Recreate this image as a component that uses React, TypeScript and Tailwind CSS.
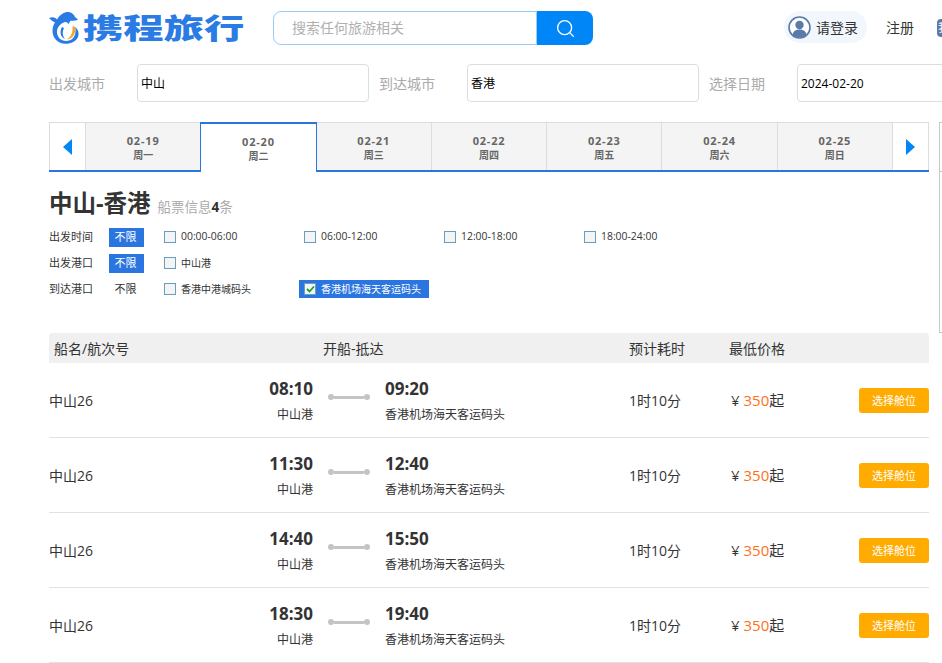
import { Search } from 'lucide-react';

const dates = [
    { d: '02-19', w: '周一' },
    { d: '02-20', w: '周二', active: true },
    { d: '02-21', w: '周三' },
    { d: '02-22', w: '周四' },
    { d: '02-23', w: '周五' },
    { d: '02-24', w: '周六' },
    { d: '02-25', w: '周日' },
];

const trips = [
    { dep: '08:10', arr: '09:20' },
    { dep: '11:30', arr: '12:40' },
    { dep: '14:40', arr: '15:50' },
    { dep: '18:30', arr: '19:40' },
];

function Logo() {
    return (
        <svg width="30" height="33" viewBox="0 0 30 33" className="shrink-0">
            <path
                d="M0 7 C3 5.5 6 6 8 8.5 C11 3 16 0.5 20 1 C23 1.5 25.5 4 26 6 L29 8.5 C27 9.8 24 10 21.5 9.8 L19.5 13 C18.5 11.5 17.5 10.8 16 11 C11 12.5 8 16.5 8 21 C8 26 12 30 17 30 C23 30 27 26 26.5 18 L26 16 C29 18 30.5 22 29 26 C27 30.5 22 33 16 32.8 C9 32.5 3.5 27 3.5 20 C3.5 16.5 4.5 13.5 6 11.5 C4 10.5 2 9 0 7 Z"
                fill="#2a7be4"
            />
            <path d="M13 16 C10.5 20 11 26 16 28 C13.5 25 13 21 15 17 Z" fill="#2a7be4" />
            <path d="M23.5 15.5 L25.8 15.5 C27.5 22 24 28 17.5 28.5 C21 27 23.5 23 23.5 18 Z" fill="#f5a623" />
        </svg>
    );
}

function Check({ label, checked, className }: { label: string; checked?: boolean; className?: string }) {
    return (
        <div className="flex items-center gap-[5px] whitespace-nowrap">
            <span className="flex h-3 w-3 shrink-0 items-center justify-center border border-[#6b9dbd] bg-[#f4f4f4]">
                {checked && (
                    <svg width="9" height="8" viewBox="0 0 9 8">
                        <path d="M1 4 L3.5 6.5 L8 1.5" fill="none" stroke="#16a02a" strokeWidth="1.8" />
                    </svg>
                )}
            </span>
            <span className={className ?? 'text-[10px]'}>{label}</span>
        </div>
    );
}

function Field({ label, value, width }: { label: string; value: string; width: string }) {
    return (
        <div className="flex shrink-0 items-center">
            <span className="w-[88px] pt-[2px] text-sm text-[#aaaaaa]">{label}</span>
            <div className={`flex h-[38px] items-center rounded border border-[#dddddd] pl-[3px] pt-[2px] text-xs text-black ${width}`}>{value}</div>
        </div>
    );
}

export default function App() {
    return (
        <div className="h-[663px] w-[942px] overflow-hidden bg-white font-['Open_Sans','Noto_Sans_CJK_SC',sans-serif] text-[#333333]">
            {/* Header */}
            <div className="flex h-[64px] pl-[49px] pt-[11px]">
                <div className="flex w-[224px] shrink-0 items-start gap-[4px]">
                    <Logo />
                    <span className="origin-left scale-x-[1.44] whitespace-nowrap text-[28px] font-black leading-[34px] text-[#2a7be4]">携程旅行</span>
                </div>
                <div className="flex h-[34px] w-[320px] shrink-0">
                    <div className="flex flex-1 items-center rounded-l-lg border border-[#9accf5] pl-[18px] text-sm text-[#b0b0b0]">搜索任何旅游相关</div>
                    <div className="flex w-[56px] items-center justify-center rounded-r-lg bg-[#0086f6]">
                        <Search size={21} color="#ffffff" strokeWidth={1.5} />
                    </div>
                </div>
                <div className="ml-[191px] flex h-[32px] w-[83px] shrink-0 items-center gap-[5px] rounded-full bg-[#f2f7fd] pl-[4px] text-[14px]">
                    <svg width="23" height="23" viewBox="0 0 23 23" className="shrink-0">
                        <circle cx="11.5" cy="11.5" r="10.5" fill="#ffffff" stroke="#5a7ba8" strokeWidth="1.6" />
                        <circle cx="11.5" cy="9" r="4.2" fill="#5a7ba8" />
                        <path d="M4.5 19 C5 15 8 13.5 11.5 13.5 C15 13.5 18 15 18.5 19 C15 22 8 22 4.5 19 Z" fill="#5a7ba8" />
                    </svg>
                    <span className="whitespace-nowrap">请登录</span>
                </div>
                <span className="ml-[19px] mt-[6px] shrink-0 whitespace-nowrap text-[14px]">注册</span>
                <span className="ml-[23px] mt-[8px] flex h-[18px] w-[60px] shrink-0 items-center rounded-sm bg-[#5a7ba8] pl-[1px] text-[11px] text-white">我</span>
            </div>

            {/* Search fields */}
            <div className="flex pl-[49px]">
                <Field label="出发城市" value="中山" width="w-[232px]" />
                <div className="ml-[10px] shrink-0">
                    <Field label="到达城市" value="香港" width="w-[232px]" />
                </div>
                <div className="ml-[10px] shrink-0">
                    <Field label="选择日期" value="2024-02-20" width="w-[232px]" />
                </div>
            </div>

            <div className="ml-[49px] mt-[20px] flex items-start">
                <div className="w-[880px] shrink-0">
                    {/* Date strip */}
                    <div className="flex h-[50px] border-b-2 border-[#2a75e0]">
                        <div className="flex w-[37px] shrink-0 items-center justify-center border-x border-t border-[#dddddd]">
                            <span className="h-0 w-0 border-y-[8px] border-r-[9px] border-y-transparent border-r-[#0086f6]" />
                        </div>
                        {dates.map((item) =>
                            item.active ? (
                                <div key={item.d} className="z-10 -mb-[2px] -ml-px flex w-[116.29px] shrink-0 flex-col items-center border-x border-t-2 border-x-[#2a75e0] border-t-[#2a75e0] bg-white pt-[11px] text-[#666666]">
                                    <span className="text-[11px] font-bold leading-[14px] tracking-[0.8px]">{item.d}</span>
                                    <span className="text-[10px] font-bold leading-[15px]">{item.w}</span>
                                </div>
                            ) : (
                                <div key={item.d} className="flex w-[115.29px] shrink-0 flex-col items-center border-r border-t border-[#dddddd] bg-[#f4f4f4] pt-[11px] text-[#666666]">
                                    <span className="text-[11px] font-bold leading-[14px] tracking-[0.8px]">{item.d}</span>
                                    <span className="text-[10px] font-bold leading-[15px]">{item.w}</span>
                                </div>
                            ),
                        )}
                        <div className="flex flex-1 items-center justify-center border-r border-t border-[#dddddd]">
                            <span className="h-0 w-0 border-y-[8px] border-l-[9px] border-y-transparent border-l-[#0086f6]" />
                        </div>
                    </div>

                    {/* Title */}
                    <div className="mt-[14px] flex items-baseline gap-[7px]">
                        <h1 className="text-[23.5px] font-bold leading-[34px] text-[#333333]">中山-香港</h1>
                        <span className="text-[13.5px] text-[#aaaaaa]">
                            船票信息<b className="text-[#333333]">4</b>条
                        </span>
                    </div>

                    {/* Filters */}
                    <div className="mt-[4px] flex flex-col text-[11px]">
                        <div className="flex h-[26px] items-center">
                            <span className="w-[60px]">出发时间</span>
                            <span className="flex h-[19px] w-[35px] items-center justify-center bg-[#2a75e0] pr-[2px] text-white">不限</span>
                            <div className="ml-[20px] w-[140px]"><Check label="00:00-06:00" className="text-[10.4px]" /></div>
                            <div className="w-[140px]"><Check label="06:00-12:00" className="text-[10.4px]" /></div>
                            <div className="w-[140px]"><Check label="12:00-18:00" className="text-[10.4px]" /></div>
                            <div className="w-[140px]"><Check label="18:00-24:00" className="text-[10.4px]" /></div>
                        </div>
                        <div className="flex h-[26px] items-center">
                            <span className="w-[60px]">出发港口</span>
                            <span className="flex h-[19px] w-[35px] items-center justify-center bg-[#2a75e0] pr-[2px] text-white">不限</span>
                            <div className="ml-[20px]"><Check label="中山港" /></div>
                        </div>
                        <div className="flex h-[26px] items-center">
                            <span className="w-[60px]">到达港口</span>
                            <span className="flex h-[19px] w-[35px] items-center justify-center pr-[2px]">不限</span>
                            <div className="ml-[20px] w-[135px]"><Check label="香港中港城码头" /></div>
                            <div className="flex h-[18px] w-[130px] items-center bg-[#2a75e0] pl-[5px] text-white"><Check label="香港机场海天客运码头" checked /></div>
                        </div>
                    </div>

                    {/* Table */}
                    <div className="mt-[31px]">
                        <div className="flex h-[30px] items-center rounded-t bg-[#f0f0f0] pl-[5px] pt-[2px] text-sm">
                            <span className="w-[269px]">船名/航次号</span>
                            <span className="w-[306px]">开船-抵达</span>
                            <span className="w-[100px]">预计耗时</span>
                            <span>最低价格</span>
                        </div>
                        {trips.map((t) => (
                            <div key={t.dep} className="flex h-[75px] items-center border-b border-[#e2e2e2] pt-[2px]">
                                <span className="w-[180px] text-sm">中山26</span>
                                <div className="flex w-[84px] flex-col items-end">
                                    <span className="text-[17px] font-bold leading-[24px]">{t.dep}</span>
                                    <span className="mt-[4px] text-xs leading-[20px]">中山港</span>
                                </div>
                                <div className="mx-[15px] mb-[8px] flex w-[42px] items-center">
                                    <span className="h-[6px] w-[6px] rounded-full bg-[#c4c4c4]" />
                                    <span className="h-[3px] flex-1 bg-[#c4c4c4]" />
                                    <span className="h-[6px] w-[6px] rounded-full bg-[#c4c4c4]" />
                                </div>
                                <div className="flex w-[244px] flex-col">
                                    <span className="text-[17px] font-bold leading-[24px]">{t.arr}</span>
                                    <span className="mt-[4px] text-xs leading-[20px]">香港机场海天客运码头</span>
                                </div>
                                <span className="w-[102px] text-sm">1时10分</span>
                                <span className="-mt-[2px] w-[128px] text-[15px]">
                                    ¥ <span className="text-[#ff6f1a]">350</span>起
                                </span>
                                <button className="-mt-[2px] flex h-[25px] w-[70px] items-center justify-center rounded-[3px] bg-[#ffab00] pt-[3px] text-[11px] text-white">选择舱位</button>
                            </div>
                        ))}
                    </div>
                </div>

                {/* Side panel, cut off by the window */}
                <div className="ml-[10px] h-[211px] w-[60px] shrink-0 border border-[#c8c8c8]">
                    <div className="h-[49px] border-b border-[#c8c8c8]" />
                </div>
            </div>
        </div>
    );
}
